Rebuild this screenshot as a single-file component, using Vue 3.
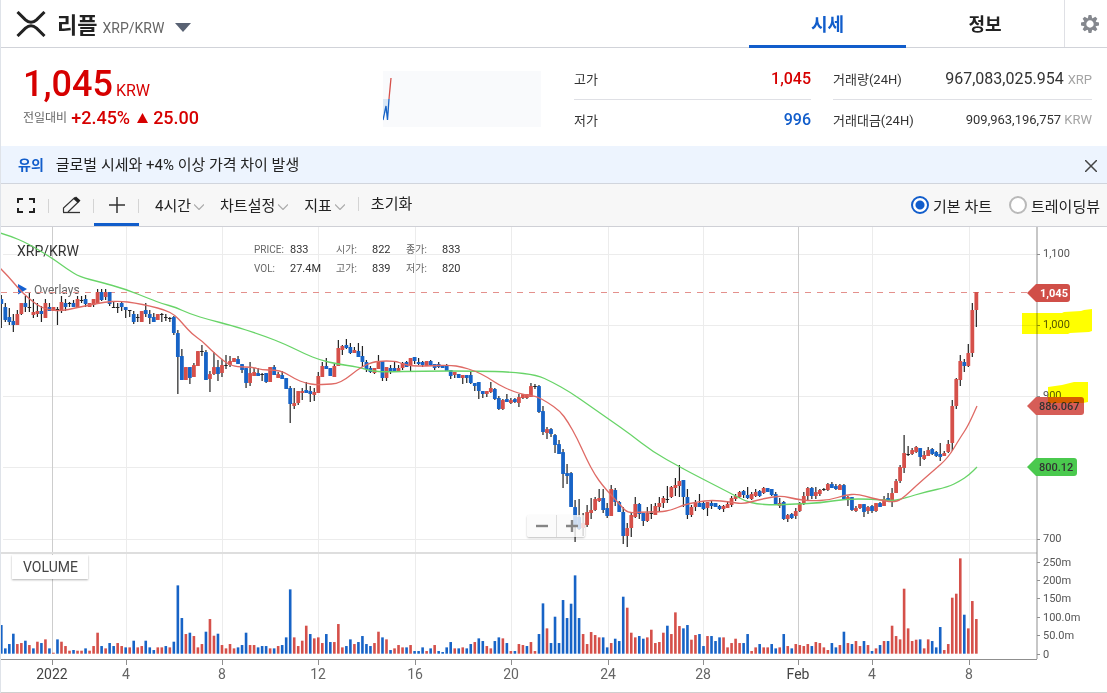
<script setup>
import { ref } from 'vue'

const mode = ref('basic')
const tab = ref('price')

// Each candle: colour (r up, b down, k flat), body top, body bottom, wick top, wick bottom
const candleData = `
b299,304,295,328 b307,320,303,322 b317,322,308,325 b321,325,314,332 r314,325,310,325 r303,314,303,315 b303,307,296,312 k307,308,293,312
r312,315,299,318 r311,314,303,317 b311,314,306,322 r303,318,299,318 b307,311,303,311 r307,311,307,311 k309,310,307,325 r302,310,296,313
b303,307,299,311 k303,304,302,307 b303,307,300,307 r299,307,296,307 k300,301,296,303 b299,304,295,307 r303,307,303,307 r299,305,299,307
r292,304,289,304 b292,300,289,301 r292,297,289,300 b292,304,292,306 k307,308,302,308 k307,308,303,313 b303,307,302,311 b307,310,307,318
k310,311,310,317 b314,322,311,324 k317,318,314,322 r311,322,311,322 b310,314,303,317 b314,318,310,324 b317,322,313,322 r314,320,314,320
k314,315,313,322 k317,318,314,321 k318,319,317,322 b317,333,316,335 b333,357,330,394 b356,380,349,380 r367,380,367,380 b367,378,367,384
r365,377,363,377 r351,366,351,366 k351,352,345,356 b352,380,350,380 r374,379,371,392 r367,374,352,375 b367,374,360,381 r365,373,359,377
k365,366,355,369 r361,365,356,367 r358,362,358,362 b359,364,356,364 b364,370,364,373 b368,383,368,388 r373,383,362,386 r372,376,368,376
b373,376,368,376 k374,375,373,381 b373,382,373,383 r367,382,367,382 b367,375,365,375 r374,378,372,378 b375,379,371,379 b378,389,378,389
b388,404,386,423 r403,406,388,409 r391,403,391,405 r391,393,388,400 b390,393,382,393 b391,394,386,402 r392,395,388,401 r376,393,372,393
r366,377,362,377 b366,369,358,369 b368,376,368,376 r366,377,364,377 r348,366,340,366 r346,350,345,355 b345,348,339,349 b347,353,343,354
r350,353,347,353 b351,357,343,357 b356,362,346,367 b362,369,360,372 b368,372,366,373 r368,373,368,374 r361,369,355,369 b361,378,361,381
r367,378,367,381 b368,371,365,374 b368,371,362,371 r368,371,365,371 r363,368,362,370 b362,367,361,367 r358,366,358,371 b357,361,357,364
b362,364,358,365 b362,365,361,367 r361,366,361,366 b361,365,360,366 b364,368,364,370 b364,367,362,368 b365,368,365,368 b365,371,364,371
b370,376,370,379 r372,375,372,378 b374,378,374,378 r375,378,375,384 b375,378,375,383 b375,383,371,384 b383,386,383,391 b382,391,382,399
b391,394,391,398 r391,394,391,397 r388,392,382,393 b389,399,388,400 b398,409,396,410 r400,409,399,410 b399,402,394,402 r400,403,398,404
b399,402,398,403 r397,403,394,407 r394,398,394,399 r394,398,394,399 r386,397,383,397 k386,387,384,389 b386,412,385,413 b411,432,406,435
r429,433,427,439 b429,434,428,437 b435,445,434,453 b444,454,440,454 b452,474,449,488 b473,476,464,484 b473,507,472,507 b507,525,500,542
b517,529,499,530 r523,528,513,536 r512,525,505,527 r510,513,498,519 r499,510,497,511 r498,501,489,502 b498,510,489,513 b508,516,503,518
r489,516,485,516 b490,502,488,506 b502,512,501,512 b512,536,507,544 r528,536,523,547 r515,528,513,537 r504,517,497,518 b504,514,503,519
b513,521,513,526 r513,521,507,522 k513,514,504,519 r506,515,503,515 r503,507,497,512 r498,503,496,508 k499,500,486,503 r487,497,486,498
r485,488,478,496 r481,486,465,497 b480,497,480,507 b497,515,489,519 r507,515,505,517 r503,507,500,511 b503,507,494,507 b503,509,501,510
r502,508,502,516 b503,506,501,509 b503,507,503,507 b506,509,505,510 r506,509,505,512 r504,508,502,508 r498,505,496,507 r496,499,494,501
r492,497,491,498 b491,495,490,498 b495,498,487,499 r494,499,492,500 r492,496,489,497 b491,496,490,497 r488,493,487,494 b488,492,488,492
b489,495,489,496 b494,505,492,505 r503,506,498,508 b502,519,501,520 r515,519,514,522 b514,518,513,519 r511,516,508,519 r503,511,502,512
r496,504,492,505 r488,496,487,500 b488,496,487,499 r492,496,487,499 r490,494,489,496 k489,490,488,491 r484,490,483,491 b484,488,482,488
b486,489,484,490 r485,490,484,490 b485,499,484,499 r497,499,496,506 b497,510,497,511 r508,511,506,512 r504,508,504,509 b504,512,504,517
r507,511,506,514 b506,511,505,513 r503,511,503,512 b503,507,502,507 r499,506,496,506 b498,501,493,501 r493,502,488,507 r481,493,479,493
r467,481,465,483 r453,468,435,473 k454,455,446,456 r450,454,448,455 r447,452,446,453 b448,457,448,466 r455,459,451,460 r450,456,447,456
b449,454,448,455 b452,456,451,457 b454,457,443,461 r453,456,451,456 r444,452,440,453 r406,443,400,451 r379,406,378,409 r361,380,355,386
b362,366,359,372 r353,366,344,367 r310,353,303,357 r292,310,292,327`

// Traded volume per candle, oldest first
const volumeData = `
b86 b16 b29 b60 r29 r32 b39 r26 b16 r36 b32 r43 b16 r3 b43 r36 r23 r9 b11 r9 r9 b16 r9 r23 r63 b23 r16 b32 b23 r32 r23 b19 r19 b39 r19 r23 b39 b19 b11 r19
r19 b23 r19 b36 b205 b107 r59 b63 r53 r19 r29 b66 r104 r54 b60 r26 r16 r29 r16 b19 b26 b63 r26 r26 b19 b23 b23 r16 b16 r23
b26 b49 b193 r49 r23 r39 r84 b59 r46 r49 r32 b59 b35 r35 r89 r19 b23 b43 r29 b35 b53 b29 b23 r32 r66 b49 r43 b11 r16 r26 r19 b19 r26 b8 b8 b19 r8 b16 r26 b8
b5 b19 b35 r16 b16 r19 b16 b29 r35 b46 b38 r23 r16 b38 b49 r46 b32 r8 b8 r29 r26 b23 r35 r8 b59 b151 r76
b32 b111 b32 b161 b107 b150 b235 b107 r59 r29 r65 r56 r49 b49 b19 r32 b45 b38 b171 r138 r63 r49 b53 b45 r49 r72 r32 r35 r63 b84 r59 r124 r83 b76 b86 r42 r56 b59 b23 r53
b53 b38 b49 r49 r19 r32 r45 r32 b32 b59 r8 r19 b29 r19 r19 b29 b16 r19 b59 r23 b16 r29 r26 r23 r29 b23 r35 r32
r19 r11 b32 b19 r26 b66 r32 b29 r38 r23 b38 r26 b8 r16 b26 r38 b38 r84 r53 r43 r195 r76 r38 r42 b43 r16 r43 b38 b19 b80 r11 r29 r168 r180 r286 b117 r76 r158 r104`

const xAt = (i) => 1.3 + i * 4.0125
const candles = candleData.trim().split(/\s+/).map((c, i) => {
  const [top, bottom, high, low] = c.slice(1).split(',').map(Number)
  return { x: xAt(i), kind: c[0], top, bottom, high, low }
})
const volumes = volumeData.trim().split(/\s+/).map((v, i) => ({
  x: xAt(i), kind: v[0], h: Number(v.slice(1)) / 3,
}))

// Smooth path through the moving-average points
const smooth = (pts) => {
  let d = `M${pts[0]}`
  for (let i = 1; i < pts.length - 1; i++) {
    const [x, y] = pts[i]
    const [nx, ny] = pts[i + 1]
    d += ` Q${x},${y} ${(x + nx) / 2},${(y + ny) / 2}`
  }
  return `${d} L${pts[pts.length - 1]}`
}
const shortAvg = smooth([[0, 268], [8, 276], [18, 288], [27, 297], [40, 307], [50, 310], [62, 311], [75, 308], [90, 305], [105, 302], [120, 301], [135, 303], [150, 306], [165, 310], [175, 315], [183, 324], [192, 334], [202, 341], [210, 349], [220, 358], [228, 364], [237, 367], [252, 367], [262, 370], [275, 370], [284, 372], [295, 379], [305, 383], [317, 385], [327, 384], [336, 384], [346, 379], [357, 370], [367, 364], [378, 361], [395, 361], [403, 364], [412, 366], [425, 366], [450, 365], [462, 367], [475, 371], [487, 377], [499, 385], [512, 391], [525, 395], [536, 396], [547, 402], [560, 411], [568, 422], [577, 438], [587, 460], [595, 475], [603, 486], [612, 496], [622, 507], [628, 513], [640, 512], [660, 512], [672, 510], [683, 505], [697, 502], [712, 500], [730, 502], [743, 504], [758, 500], [772, 497], [783, 496], [795, 499], [810, 501], [830, 500], [845, 495], [858, 494], [872, 498], [885, 501], [893, 502], [901, 500], [917, 485], [933, 471], [948, 458], [960, 438], [968, 426], [977, 406]])
const longAvg = smooth([[0, 233], [10, 236], [27, 243], [52, 258], [67, 269], [80, 277], [100, 282], [125, 289], [150, 299], [163, 304], [175, 307], [190, 314], [210, 320], [230, 325], [262, 335], [287, 345], [305, 354], [320, 360], [337, 364], [358, 367], [372, 371], [385, 372], [420, 371], [480, 371], [510, 372], [537, 375], [552, 382], [570, 392], [590, 406], [610, 420], [630, 434], [653, 452], [680, 467], [693, 474], [730, 493], [745, 501], [757, 504], [773, 505], [795, 504], [820, 503], [845, 499], [872, 499], [893, 501], [905, 498], [925, 492], [948, 487], [960, 481], [969, 475], [977, 467]])

const days = [
  { x: 52, label: '2022', strong: true }, { x: 126, label: '4' }, { x: 222, label: '8' },
  { x: 318, label: '12' }, { x: 415, label: '16' }, { x: 511, label: '20' },
  { x: 608, label: '24' }, { x: 703, label: '28' }, { x: 798, label: 'Feb', strong: true },
  { x: 872, label: '4' }, { x: 969, label: '8' },
]
const prices = [
  { y: 254, label: '1,100' }, { y: 325, label: '1,000' }, { y: 396, label: '900' },
  { y: 467, label: '' }, { y: 539, label: '700' },
]
const volTicks = [
  { y: 562, label: '250m' }, { y: 580, label: '200m' }, { y: 598, label: '150m' },
  { y: 617, label: '100.0m' }, { y: 635, label: '50.0m' }, { y: 654, label: '0' },
]
const menus = ['4시간', '차트설정', '지표']
</script>

<template>
  <main class="page">
    <header class="top">
      <button class="coin">
        <svg class="logo" width="30" height="26" viewBox="0 0 30 26" aria-hidden="true">
          <path d="M1.500 1L9.500 8.800Q15 13.800 20.500 8.800L28.500 1M1.500 25L9.500 17.200Q15 12.200 20.500 17.200L28.500 25" fill="none" stroke="#222" stroke-width="3" />
        </svg>
        <strong>리플</strong>
        <span class="pair">XRP/KRW</span>
        <svg width="16" height="9" viewBox="0 0 16 9" aria-hidden="true"><path d="M0 0H16L8 9Z" fill="#596273" /></svg>
      </button>
      <nav class="tabs">
        <button :class="{ on: tab === 'price' }" @click="tab = 'price'">시세</button>
        <button :class="{ on: tab === 'info' }" @click="tab = 'info'">정보</button>
      </nav>
      <button class="gear" aria-label="설정">
        <svg width="18" height="18" viewBox="-9 -9 18 18" aria-hidden="true">
          <g fill="#85888e">
            <path v-for="n in 8" :key="n" d="M-2.200 -5.500L-1.400 -9H1.400L2.200 -5.500Z" :transform="`rotate(${n * 45})`" />
          </g>
          <circle r="5" fill="none" stroke="#85888e" stroke-width="2.600" />
        </svg>
      </button>
    </header>

    <section class="summary">
      <div class="quote">
        <div class="last"><b>1,045</b><span>KRW</span></div>
        <div class="change">
          <small>전일대비</small><b>+2.45%</b>
          <svg width="11" height="10" viewBox="0 0 11 10" aria-hidden="true"><path d="M5.500 0L11 10H0Z" fill="#d60000" /></svg>
          <b>25.00</b>
        </div>
      </div>
      <svg class="spark" width="158" height="56" viewBox="0 0 158 56" aria-hidden="true">
        <rect width="158" height="56" fill="#f9fafc" />
        <rect y="28" width="6" height="14" fill="#dbe8f6" />
        <path d="M0 49L3 35L4.500 49L6 28" fill="none" stroke="#1763c6" stroke-width="1.300" />
        <path d="M6 28L8 7" fill="none" stroke="#d5504a" stroke-width="1.300" />
      </svg>
      <dl class="stats narrow">
        <div><dt>고가</dt><dd class="up">1,045</dd></div>
        <div><dt>저가</dt><dd class="down">996</dd></div>
      </dl>
      <dl class="stats">
        <div><dt>거래량(24H)</dt><dd>967,083,025.954 <i>XRP</i></dd></div>
        <div><dt>거래대금(24H)</dt><dd class="small">909,963,196,757 <i>KRW</i></dd></div>
      </dl>
    </section>

    <section class="notice">
      <b>유의</b>
      <p>글로벌 시세와 +4% 이상 가격 차이 발생</p>
      <button aria-label="닫기">
        <svg width="12" height="12" viewBox="0 0 12 12" aria-hidden="true"><path d="M0 0L12 12M12 0L0 12" stroke="#444" stroke-width="1.500" /></svg>
      </button>
    </section>

    <section class="toolbar">
      <div class="tools">
        <button aria-label="전체화면">
          <svg width="18" height="15" viewBox="0 0 18 15" aria-hidden="true"><path d="M1 5V1H6M12 1H17V5M17 10V14H12M6 14H1V10" fill="none" stroke="#222" stroke-width="2" /></svg>
        </button>
        <button aria-label="그리기">
          <svg width="19" height="18" viewBox="0 0 19 18" aria-hidden="true">
            <path d="M1.500 16V12L12.500 1.800L16.800 5.500L6 16" fill="none" stroke="#333" stroke-width="1.200" />
            <path d="M11.500 3L14 .5L18.500 4.500L15.800 7Z" fill="#222" />
            <path d="M1 16.500H18" stroke="#333" stroke-width="1.300" />
          </svg>
        </button>
        <button class="active" aria-label="십자선">
          <svg width="16" height="16" viewBox="0 0 16 16" aria-hidden="true"><path d="M8 0V16M0 8H16" stroke="#333" stroke-width="1.500" /></svg>
        </button>
      </div>
      <div class="menus">
        <button v-for="m in menus" :key="m">
          {{ m }}
          <svg width="10" height="6" viewBox="0 0 10 6" aria-hidden="true"><path d="M0 .5L5 5.500L10 .5" fill="none" stroke="#aaa" stroke-width="1.200" /></svg>
        </button>
        <button class="reset">초기화</button>
      </div>
      <div class="modes">
        <label><input v-model="mode" type="radio" name="mode" value="basic">기본 차트</label>
        <label><input v-model="mode" type="radio" name="mode" value="tv">트레이딩뷰</label>
      </div>
    </section>

    <section class="chart">
      <svg class="plot" viewBox="1 227 1106 465" role="img" aria-label="XRP/KRW">
        <g class="grid">
          <line v-for="p in prices" :key="p.y" x1="3" x2="1037" :y1="p.y + 0.5" :y2="p.y + 0.5" />
          <line v-for="d in days" :key="d.x" :x1="d.x + 0.5" :x2="d.x + 0.5" y1="227" y2="654" :class="{ strong: d.strong }" />
        </g>
        <line class="divider" x1="1" x2="1037" y1="553" y2="553" />

        <text class="sym" x="17" y="256">XRP/KRW</text>
        <path d="M18 284L27 289L18 294.500Z" fill="#1560d0" />
        <text class="overlays" x="34" y="294">Overlays</text>
        <line class="lastline" x1="1" x2="1028" y1="292.500" y2="292.500" />

        <g class="info">
          <text x="254" y="253">PRICE:</text><text class="v" x="290" y="253">833</text>
          <text x="254" y="272">VOL:</text><text class="v" x="290" y="272">27.4M</text>
          <text x="336" y="253">시가:</text><text class="v" x="372" y="253">822</text>
          <text x="336" y="272">고가:</text><text class="v" x="372" y="272">839</text>
          <text x="406" y="253">종가:</text><text class="v" x="442" y="253">833</text>
          <text x="406" y="272">저가:</text><text class="v" x="442" y="272">820</text>
        </g>

        <g v-for="c in candles" :key="c.x" :class="c.kind">
          <rect class="wick" :x="c.x - 0.6" :y="c.high" width="1.200" :height="c.low - c.high" />
          <rect :x="c.x - 1.9" :y="c.top" width="3.800" :height="c.bottom - c.top" rx="0.500" />
        </g>
        <g v-for="v in volumes" :key="v.x" :class="v.kind">
          <rect :x="v.x - 1.3" :y="653.7 - v.h" width="2.600" :height="v.h" />
        </g>
        <path class="avg long" :d="longAvg" />
        <path class="avg short" :d="shortAvg" />

        <path class="axis" d="M1037 227V659" />
        <path class="axis" d="M1 659.500H1037" />
        <path v-for="d in days" :key="d.x" class="tick" :d="`M${d.x + 0.5} 659V665`" />
        <path v-for="p in prices" :key="p.y" class="tick" :d="`M1037 ${p.y + 0.5}H1040`" />
        <path v-for="t in volTicks" :key="t.y" class="tick" :d="`M1037 ${t.y + 0.5}H1040`" />
        <text v-for="d in days" :key="d.x" class="day" :class="{ strong: d.strong }" :x="d.x" y="679">{{ d.label }}</text>
        <text v-for="p in prices" :key="p.y" class="num" x="1043" :y="p.y + 3">{{ p.label }}</text>
        <text v-for="t in volTicks" :key="t.y" class="num" x="1043" :y="t.y + 4">{{ t.label }}</text>

        <path class="tag red" d="M1027 293L1036 284H1067Q1070 284 1070 287V299Q1070 302 1067 302H1036Z" />
        <text class="tagtext white" x="1040" y="297">1,045</text>
        <path class="tag red soft" d="M1027 406L1036 397H1081Q1084 397 1084 400V412Q1084 415 1081 415H1036Z" />
        <text class="tagtext" x="1039" y="410">886.067</text>
        <path class="tag green" d="M1027 467L1036 458H1074Q1077 458 1077 461V473Q1077 476 1074 476H1036Z" />
        <text class="tagtext" x="1039" y="471">800.12</text>

        <path class="marker" d="M1022 313H1062L1064 312L1081 311L1084 310L1092 309V331L1089 332L1070 333L1068 334H1022Z" />
        <path class="marker" d="M1048 387L1062 385L1066 384L1074 382L1088 382V402L1083 403H1048Z" />
      </svg>

      <h2 class="vol-title">VOLUME</h2>
      <div class="zoom">
        <button aria-label="축소"><svg width="12" height="12" viewBox="0 0 12 12" aria-hidden="true"><path d="M0 6H12" stroke="#858585" stroke-width="2.400" /></svg></button>
        <button aria-label="확대"><svg width="12" height="12" viewBox="0 0 12 12" aria-hidden="true"><path d="M0 6H12M6 0V12" stroke="#858585" stroke-width="2.400" /></svg></button>
      </div>
    </section>
  </main>
</template>

<style>
body {
  background: #fff;
}
</style>

<style scoped>
.page {
  border-left: 1px solid #dfe3e9;
  font-family: Roboto, "Noto Sans CJK KR", sans-serif;
  color: #222;
}
button {
  border: 0;
  padding: 0;
  background: none;
  font: inherit;
  color: inherit;
  cursor: pointer;
}
button svg {
  display: block;
}
.top {
  display: flex;
  height: 47px;
  border-bottom: 1px solid #d1d3d9;
}
.coin {
  display: flex;
  align-items: center;
  margin-right: auto;
  padding-left: 15px;
}
.coin strong {
  margin: 0 5px 0 11px;
  padding-bottom: 2px;
  font-size: 22px;
  font-weight: 700;
}
.pair {
  margin: 8px 11px 0 0;
  font-size: 14px;
  color: #666;
}
.coin svg:last-child {
  margin-top: 8px;
}
.tabs {
  display: flex;
}
.tabs button {
  width: 157px;
  height: 48px;
  box-sizing: border-box;
  border-bottom: 3px solid transparent;
  font-size: 18px;
  font-weight: 700;
}
.tabs button + button {
  width: 158px;
}
.tabs .on {
  color: #115dcb;
  border-color: #115dcb;
}
.gear {
  display: flex;
  align-items: center;
  width: 43px;
  padding-left: 16px;
  box-sizing: border-box;
  border-left: 1px solid #dfe0e5;
}
.summary {
  display: flex;
  align-items: center;
  height: 98px;
  padding: 0 15px 0 22px;
  color: #333;
}
.quote {
  flex: 1;
  color: #d60000;
}
.last {
  display: flex;
  align-items: baseline;
  line-height: 40px;
}
.last b {
  font-size: 36px;
  font-weight: 500;
}
.last span {
  margin-left: 3px;
  font-size: 16px;
  line-height: 20px;
}
.change {
  display: flex;
  align-items: center;
  line-height: 24px;
  margin-top: 2px;
}
.change b {
  font-size: 18px;
  font-weight: 500;
}
.change small {
  margin-right: 4px;
  font-size: 12px;
  color: #666;
}
.change svg {
  margin: 0 5px 0 7px;
}
.spark {
  margin: 4px 33px 0 0;
}
.stats {
  width: 259px;
  margin: 4px 0 0;
}
.stats.narrow {
  width: 237px;
  margin-right: 22px;
}
.stats div {
  display: flex;
  align-items: center;
  justify-content: space-between;
  height: 40px;
}
.stats div + div {
  border-top: 1px solid #dfe0e5;
}
.stats dt {
  font-size: 13px;
}
.stats dd {
  margin: 0;
  font-size: 16px;
}
.stats dd.small {
  font-size: 13px;
}
.stats i {
  font-size: 13px;
  font-style: normal;
  color: #a4a4a4;
}
.stats .up {
  color: #d60000;
  font-weight: 500;
}
.stats .down {
  color: #115dcb;
  font-weight: 500;
}
.notice {
  display: flex;
  align-items: center;
  height: 37px;
  padding: 0 10px 0 17px;
  background: #edf4fe;
  border-bottom: 1px solid #d1d5dd;
  font-size: 14px;
}
.notice b {
  padding-bottom: 2px;
  color: #115dcb;
}
.notice p {
  margin: 0 auto 0 12px;
  padding-bottom: 2px;
  font-size: 15px;
}
.notice button {
  padding-top: 3px;
}
.toolbar {
  display: flex;
  height: 42px;
  background: #f7f7f7;
  border-bottom: 1px solid #cfd0d6;
  font-size: 15px;
}
.tools {
  display: flex;
}
.tools button {
  position: relative;
  display: flex;
  align-items: center;
  justify-content: center;
  width: 45px;
  box-sizing: border-box;
}
.tools button:first-child {
  width: 48px;
  padding-left: 2px;
}
.tools button::after {
  content: "";
  position: absolute;
  right: 0;
  top: 15px;
  height: 14px;
  border-right: 1px solid #d4d4d4;
}
.tools .active {
  border-bottom: 3px solid #115dcb;
  padding-top: 3px;
}
.menus {
  display: flex;
  align-items: center;
  gap: 16px;
  margin: 0 auto 0 16px;
  padding-bottom: 2px;
}
.menus button {
  display: flex;
  align-items: center;
  gap: 3px;
}
.menus svg {
  margin-top: 6px;
}
.menus .reset {
  border-left: 1px solid #d4d4d4;
  margin-left: -3px;
  padding-left: 12px;
  line-height: 14px;
}
.modes {
  display: flex;
  align-items: center;
  gap: 17px;
  padding-right: 7px;
}
.modes label {
  display: flex;
  align-items: center;
  gap: 4px;
}
.modes input {
  appearance: none;
  width: 18px;
  height: 18px;
  margin: 0;
  border: 2px solid #b9b9b9;
  border-radius: 50%;
  background: #fff;
}
.modes input:checked {
  border-color: #115dcb;
  background: radial-gradient(circle, #115dcb 4px, #fff 5px);
}
.chart {
  position: relative;
  border-bottom: 1px solid #cfcfcf;
}
.plot {
  display: block;
  width: 100%;
}
.grid line {
  stroke: #ececec;
}
.grid .strong {
  stroke: #cdcdcd;
}
.divider {
  stroke: #dedede;
  stroke-width: 2;
}
.sym {
  font-size: 14px;
  fill: #333;
}
.overlays {
  font-size: 12px;
  fill: #666;
}
.lastline {
  stroke: #e4908c;
  stroke-dasharray: 6 6;
}
.info {
  font-size: 10px;
  fill: #666;
}
.info .v {
  font-size: 11px;
  fill: #333;
}
.r {
  fill: #d5504a;
}
.b {
  fill: #1763c6;
}
.k,
.wick {
  fill: #222;
}
.avg {
  fill: none;
  stroke-width: 1.300;
}
.long {
  stroke: #68d468;
}
.short {
  stroke: #df6a65;
}
.axis {
  fill: none;
  stroke: #8f8f8f;
}
.tick {
  stroke: #8f8f8f;
}
.day {
  font-size: 14px;
  fill: #666;
  text-anchor: middle;
}
.day.strong {
  fill: #444;
}
.num {
  font-size: 11px;
  fill: #555;
}
.red {
  fill: #d04f48;
}
.soft {
  fill: #d65d57;
}
.green {
  fill: #4ac94e;
}
.tagtext {
  font-size: 11px;
  font-weight: 500;
  fill: #333;
}
.white {
  fill: #fff;
  font-weight: 700;
}
.marker {
  fill: #ff0;
  mix-blend-mode: multiply;
}
.vol-title {
  position: absolute;
  left: 11px;
  top: 328px;
  margin: 0;
  padding: 0 10px 0 11px;
  background: #fff;
  box-shadow: 0 1px 2px rgba(0, 0, 0, 0.3);
  font-size: 14px;
  font-weight: 400;
  line-height: 24px;
  color: #444;
}
.zoom {
  position: absolute;
  left: 526px;
  top: 288px;
  display: flex;
  background: rgba(250, 250, 250, 0.8);
  border-radius: 2px;
  box-shadow: 0 1px 2px rgba(0, 0, 0, 0.25);
}
.zoom button {
  width: 29px;
  height: 22px;
  padding-left: 9px;
}
.zoom button + button {
  border-left: 1px solid #ddd;
}
</style>
